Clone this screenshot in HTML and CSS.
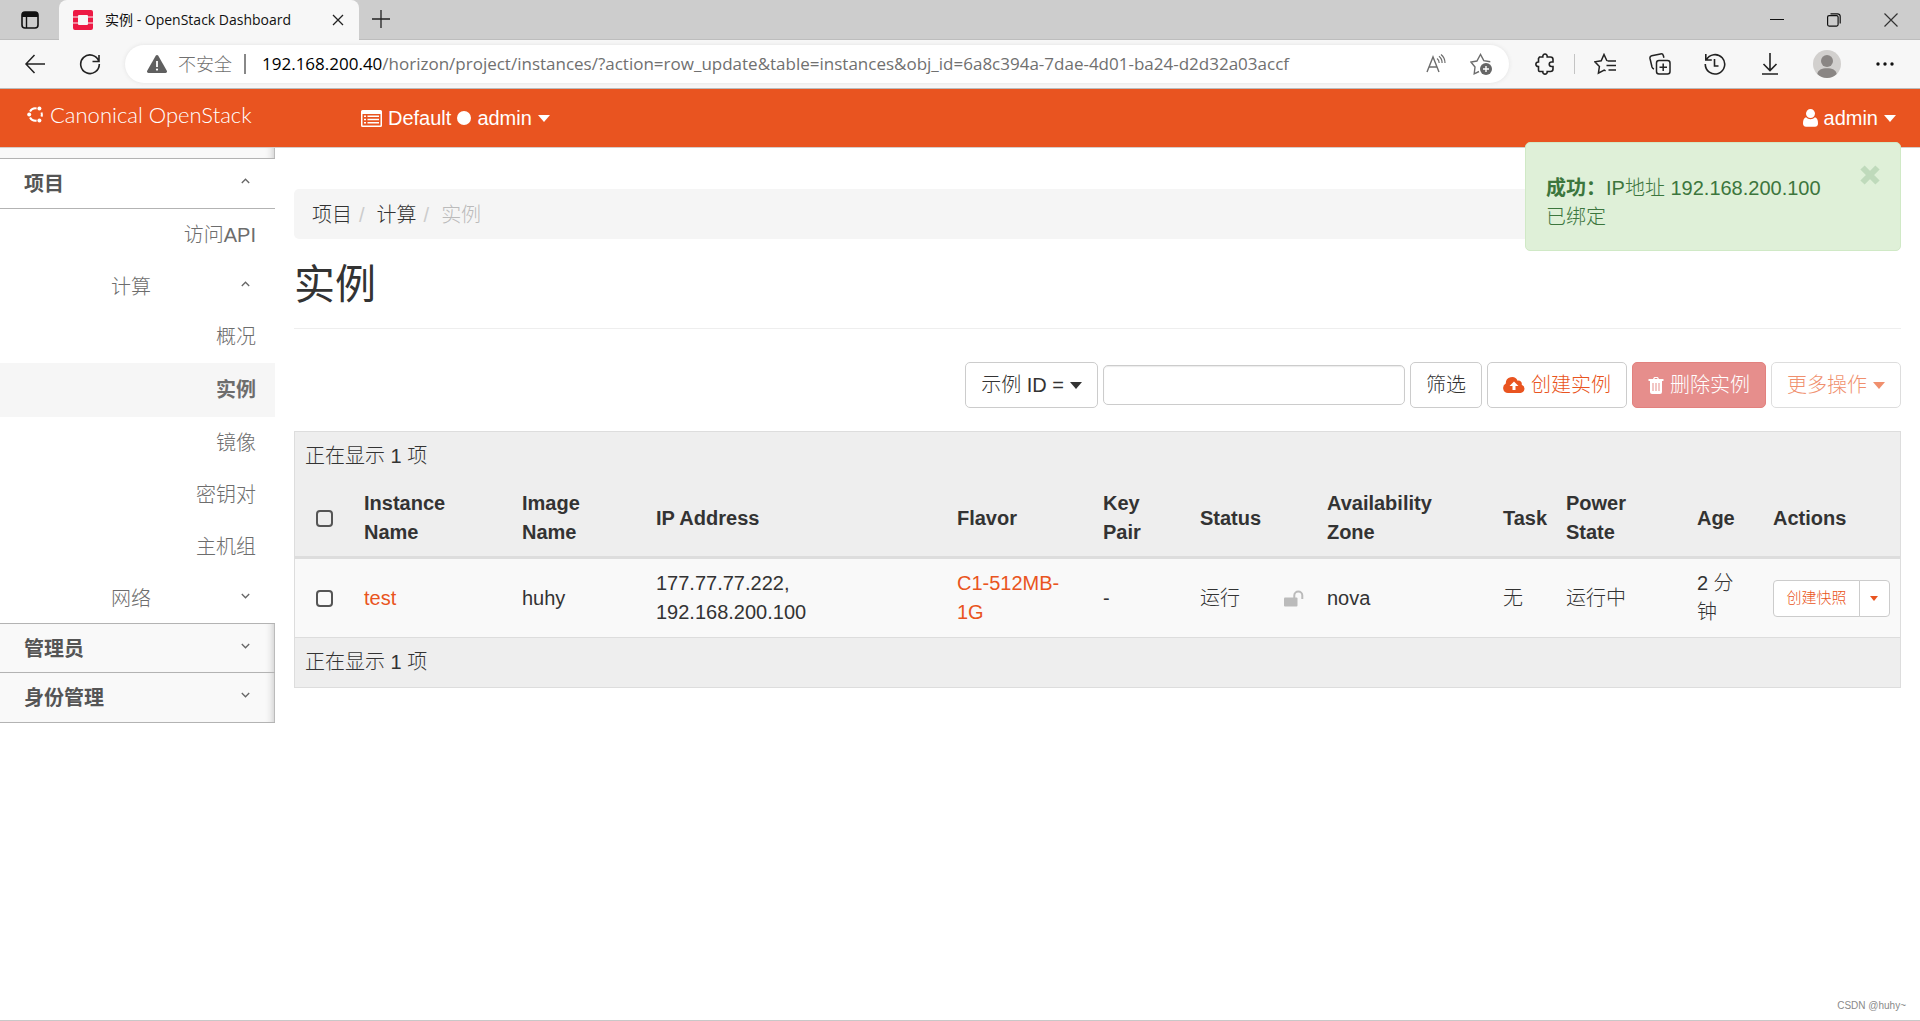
FILE: index.html
```html
<!DOCTYPE html>
<html lang="zh-CN">
<head>
<meta charset="utf-8">
<meta name="viewport" content="width=device-width, initial-scale=1">
<title>实例 - OpenStack Dashboard</title>
<link rel="stylesheet" href="styles.css">
</head>
<body>
<div class="tabstrip">
  <button class="tab-menu" aria-label="标签页操作">
    <svg width="18" height="18" viewBox="0 0 18 18"><rect x="1" y="1" width="16" height="16" rx="3" fill="none" stroke="#111" stroke-width="1.6"/><path d="M1 4a3 3 0 0 1 3-3h10a3 3 0 0 1 3 3v2H1z" fill="#111"/><path d="M5.500 6v11" stroke="#111" stroke-width="1.4"/></svg>
  </button>
  <div class="tab">
    <svg width="20" height="20" viewBox="0 0 20 20"><path fill="#ed1944" d="M2 0h16a2 2 0 0 1 2 2v4.500h-5V6a1 1 0 0 0-1-1H6a1 1 0 0 0-1 1v.5H0V2a2 2 0 0 1 2-2zM0 7.500h5v5H0zM15 7.500h5v5h-5zM0 13.500h5v.5a1 1 0 0 0 1 1h8a1 1 0 0 0 1-1v-.5h5V18a2 2 0 0 1-2 2H2a2 2 0 0 1-2-2z"/></svg>
    <span class="tab-title">实例 - OpenStack Dashboard</span>
    <button class="tab-close" aria-label="关闭标签页"><svg width="12" height="12" viewBox="0 0 12 12"><path d="M1 1l10 10M11 1L1 11" stroke="#222" stroke-width="1.300"/></svg></button>
  </div>
  <button class="new-tab" aria-label="新建标签页"><svg width="18" height="18" viewBox="0 0 18 18"><path d="M9 0v18M0 9h18" stroke="#222" stroke-width="1.300"/></svg></button>
  <div class="window-controls">
    <button aria-label="最小化"><svg width="14" height="14" viewBox="0 0 14 14"><path d="M0 6.500h14" stroke="#111"/></svg></button>
    <button aria-label="还原"><svg width="14" height="14" viewBox="0 0 14 14" fill="none" stroke="#111" stroke-width="1.200"><rect x=".6" y="2.600" width="10.500" height="10.500" rx="1.500"/><path d="M3.500.8h7a2.600 2.600 0 0 1 2.700 2.600V10.500"/></svg></button>
    <button aria-label="关闭"><svg width="14" height="14" viewBox="0 0 14 14"><path d="M.5.5l13 13M13.500.5l-13 13" stroke="#333" stroke-width="1.200"/></svg></button>
  </div>
</div>

<div class="toolbar">
  <button class="tool" aria-label="返回"><svg width="22" height="20" viewBox="0 0 22 20" fill="none" stroke="#222" stroke-width="1.500"><path d="M21 10H2M10.500 1L2 10l8.500 9"/></svg></button>
  <button class="tool" aria-label="刷新"><svg width="22" height="22" viewBox="0 0 22 22" fill="none" stroke="#222" stroke-width="1.600"><path d="M19.800 8.200A9.300 9.300 0 1 0 20.300 11M20 2v6.500h-6.500"/></svg></button>
  <div class="address">
    <svg class="warn" width="20" height="18" viewBox="0 0 20 18"><path d="M8.700.8a1.500 1.500 0 0 1 2.600 0l8.500 15a1.500 1.500 0 0 1-1.300 2.200h-17a1.500 1.500 0 0 1-1.300-2.200z" fill="#5f5f5f"/><path d="M10 6v6" stroke="#fff" stroke-width="1.800"/><circle cx="10" cy="14.600" r="1.100" fill="#fff"/></svg>
    <span class="insecure">不安全</span>
    <span class="address-sep"></span>
    <div class="url" role="textbox" aria-label="地址" contenteditable="true"><span class="host">192.168.200.40</span>/horizon/project/instances/?action=row_update&amp;table=instances&amp;obj_id=6a8c394a-7dae-4d01-ba24-d2d32a03accf</div>
    <button class="pill-tool" aria-label="朗读此页"><svg width="20" height="20" viewBox="0 0 20 20" fill="none" stroke="#6d6d6d" stroke-width="1.400"><path d="M1 18L7 3l6 15M3 13h8"/><path d="M11 4.500c1.400 1 2.200 2.600 2.200 4.500M13 2.300c2 1.500 3.100 3.900 3.100 6.700M15 .5c2.500 2 4 5 4 8.500" stroke-width="1.200"/></svg></button>
    <button class="pill-tool" aria-label="收藏此页"><svg width="22" height="22" viewBox="0 0 22 22" fill="none" stroke="#6d6d6d" stroke-width="1.400"><path d="M9 18.500l-4.800 2.300L5 14 .9 9l6-1L10.500 1.500l3.300 6.200 6.500 1"/><circle cx="16" cy="16" r="6" fill="#666" stroke="none"/><path d="M16 13v6M13 16h6" stroke="#fff"/></svg></button>
  </div>
  <button class="tool" aria-label="扩展"><svg width="20" height="22" viewBox="0 0 20 22" fill="none" stroke="#222" stroke-width="1.600"><path d="M4.500 4h3.300c-.4-4 4.800-4 4.400 0h3.300a2.500 2.500 0 0 1 2.500 2.500V9h-1.500c-3 0-3 4.500 0 4.500H18v2.500a2.500 2.500 0 0 1-2.500 2.500h-3.300c.4 3.500-4.800 3.500-4.400 0H4.500A1.500 1.500 0 0 1 3.500 17v-3.500c-3.500.3-3.500-4.800 0-4.500V5.500z"/></svg></button>
  <span class="tool-sep"></span>
  <button class="tool" aria-label="收藏夹"><svg width="22" height="22" viewBox="0 0 22 22" fill="none" stroke="#222" stroke-width="1.500"><path d="M13 8L10 1.500 7.200 7.800l-6.400 1L5.400 13.500l-1 6.700 5.800-3.100 1.400.8M13.500 8H22M12.500 12.500H22M14.500 17H22"/></svg></button>
  <button class="tool" aria-label="集锦"><svg width="22" height="22" viewBox="0 0 22 22" fill="none" stroke="#222" stroke-width="1.500"><rect x="7.500" y="7.500" width="13.500" height="13.500" rx="2.500"/><path d="M14.200 10.500v7.500M10.500 14.200H18M5 16c-1.400-.4-1.700-1-2-2L1 5.500C.7 4 1.200 3.200 2.700 2.800L11.500.9c1.500-.3 2.500.3 2.900 1.800l.5 2"/></svg></button>
  <button class="tool" aria-label="历史记录"><svg width="22" height="22" viewBox="0 0 22 22" fill="none" stroke="#222" stroke-width="1.600"><path d="M2.300 7A9.700 9.700 0 1 1 1.300 11M1.800 1v6h6M10.500 6v7h4"/></svg></button>
  <button class="tool" aria-label="下载"><svg width="18" height="22" viewBox="0 0 18 22" fill="none" stroke="#222" stroke-width="1.600"><path d="M9 0v17M2.500 11L9 17.500 15.500 11M1 21h16"/></svg></button>
  <button class="tool tool-wide" aria-label="用户"><svg width="28" height="28" viewBox="0 0 28 28"><circle cx="14" cy="14" r="14" fill="#d2d0ce"/><circle cx="14" cy="11" r="6" fill="#8a8684"/><path d="M4.300 24C5 20 8.600 18.300 14 18.300S23 20 23.700 24a14 14 0 0 1-19.400 0z" fill="#8a8684"/></svg></button>
  <button class="tool" aria-label="设置及其他"><svg width="18" height="4" viewBox="0 0 18 4" fill="#111"><circle cx="2" cy="2" r="1.700"/><circle cx="9" cy="2" r="1.700"/><circle cx="16" cy="2" r="1.700"/></svg></button>
</div>

<header class="topbar">
  <a class="brand" href="#"><svg width="17" height="17" viewBox="0 0 17 17"><g fill="none" stroke="#fff" stroke-width="2"><path d="M3 5.500A6.200 6.200 0 0 1 9.600 2.500M14.500 6.500a6.200 6.200 0 0 1 0 4.200M9.600 14.600A6.200 6.200 0 0 1 3 11.500"/></g><g fill="#fff"><circle cx="2.200" cy="8.500" r="2"/><circle cx="12.400" cy="2.500" r="2"/><circle cx="12.400" cy="14.500" r="2"/></g></svg><span>Canonical OpenStack</span></a>
  <button class="context"><svg width="21" height="17" viewBox="0 0 21 17"><path fill="#fff" fill-rule="evenodd" d="M1.500 0h18A1.500 1.500 0 0 1 21 1.500v14a1.500 1.500 0 0 1-1.500 1.500h-18A1.500 1.500 0 0 1 0 15.500v-14A1.500 1.500 0 0 1 1.500 0zM1.500 4v11.500h18V4z"/><path d="M3 6.300h2M6.500 6.300H18M3 9.500h2M6.500 9.500H18M3 12.700h2M6.500 12.700H18" stroke="#fff" stroke-width="1.500"/></svg><span>Default</span><i class="dot"></i><span>admin</span><i class="caret"></i></button>
  <button class="user"><svg width="15" height="18" viewBox="0 0 15 18" fill="#fff"><circle cx="7.500" cy="4.600" r="4.500"/><path d="M3 8.200a6 6 0 0 0 9 0c2 .5 3 3 3 6 0 2-1 3.600-3 3.600H3c-2 0-3-1.600-3-3.600 0-3 1-5.500 3-6z"/></svg><span>admin</span><i class="caret"></i></button>
</header>

<div class="layout">
  <nav class="sidebar">
    <div class="side-cap"></div>
    <a class="panel open" href="#">项目<svg class="chev" width="9" height="6" viewBox="0 0 9 6"><path d="M.8 5L4.500 1.200 8.200 5"/></svg></a>
    <a class="item" href="#">访问API</a>
    <a class="group" href="#">计算<svg class="chev" width="9" height="6" viewBox="0 0 9 6"><path d="M.8 5L4.500 1.200 8.200 5"/></svg></a>
    <a class="item" href="#">概况</a>
    <a class="item active" href="#">实例</a>
    <a class="item" href="#">镜像</a>
    <a class="item" href="#">密钥对</a>
    <a class="item" href="#">主机组</a>
    <a class="group" href="#">网络<svg class="chev" width="9" height="6" viewBox="0 0 9 6"><path d="M.8 1L4.500 4.800 8.200 1"/></svg></a>
    <a class="panel" href="#">管理员<svg class="chev" width="9" height="6" viewBox="0 0 9 6"><path d="M.8 1L4.500 4.800 8.200 1"/></svg></a>
    <a class="panel" href="#">身份管理<svg class="chev" width="9" height="6" viewBox="0 0 9 6"><path d="M.8 1L4.500 4.800 8.200 1"/></svg></a>
  </nav>

  <main class="content">
    <ol class="breadcrumb"><li><a href="#">项目</a></li><li><a href="#">计算</a></li><li class="here">实例</li></ol>
    <h1>实例</h1>
    <div class="actions">
      <button class="btn">示例 ID =<i class="caret"></i></button>
      <input class="filter" type="text" aria-label="筛选条件">
      <button class="btn">筛选</button>
      <button class="btn btn-link"><svg width="22" height="16" viewBox="0 0 22 16"><path fill="#e95420" fill-rule="evenodd" d="M5 16a5 5 0 0 1-2.200-9.400A6.200 6.200 0 0 1 14.600 3.700 3.300 3.300 0 0 1 18.700 7.700 4.300 4.300 0 0 1 17.500 16zM11 4.500L6.500 9h3v4h3V9h3z"/></svg>创建实例</button>
      <button class="btn btn-danger" disabled><svg width="16" height="17" viewBox="0 0 16 17"><path fill="#fff" fill-rule="evenodd" d="M5 2l.8-1.500Q6 0 6.600 0h2.800q.6 0 .8.500L11 2h4.500v2H14v11a2 2 0 0 1-2 2H4a2 2 0 0 1-2-2V4H.500V2zM6.500 2h3l-.4-.9H6.900zM4.500 6v8h1V6zM7.500 6v8h1V6zM10.500 6v8h1V6z"/></svg>删除实例</button>
      <button class="btn btn-link" disabled>更多操作<i class="caret"></i></button>
    </div>
    <table class="grid">
      <colgroup><col class="c-check"><col class="c-name"><col class="c-image"><col><col class="c-flavor"><col class="c-key"><col class="c-status"><col class="c-lock"><col class="c-zone"><col class="c-task"><col class="c-power"><col class="c-age"><col class="c-act"></colgroup>
      <thead>
        <tr><td colspan="13">正在显示 1 项</td></tr>
        <tr class="heads"><th class="check"><input type="checkbox" aria-label="全选"></th><th>Instance Name</th><th>Image Name</th><th>IP Address</th><th>Flavor</th><th>Key Pair</th><th>Status</th><th></th><th>Availability Zone</th><th>Task</th><th>Power State</th><th>Age</th><th>Actions</th></tr>
      </thead>
      <tbody>
        <tr><td class="check"><input type="checkbox" aria-label="选择 test"></td><td><a href="#">test</a></td><td>huhy</td><td>177.77.77.222,<br>192.168.200.100</td><td><a href="#">C1-512MB-1G</a></td><td>-</td><td>运行</td><td><svg class="lock" width="20" height="17" viewBox="0 0 20 17"><rect y="7.500" width="13.500" height="9" rx="1" fill="#bbb"/><path d="M10.300 8V5.500a4 4 0 0 1 8 0V9" fill="none" stroke="#bbb" stroke-width="2"/></svg></td><td>nova</td><td>无</td><td>运行中</td><td>2 分钟</td><td><div class="split"><button class="snap">创建快照</button><button class="more" aria-label="更多"><i class="caret"></i></button></div></td></tr>
      </tbody>
      <tfoot><tr><td colspan="13">正在显示 1 项</td></tr></tfoot>
    </table>
  </main>

  <div class="alert" role="alert">
    <p><strong>成功：</strong>IP地址 192.168.200.100 已绑定</p>
    <button class="dismiss" aria-label="关闭"><svg width="20" height="20" viewBox="0 0 20 20"><path d="M2.500 2.500l15 15M17.500 2.500l-15 15" stroke="#bfdabb" stroke-width="6"/></svg></button>
  </div>
</div>
<footer class="credit">CSDN @huhy~</footer>
</body>
</html>
```
FILE: styles.css
```css
* { box-sizing: border-box; }

body {
  margin: 0;
  min-height: 100vh;
  display: flex;
  flex-direction: column;
  border-bottom: 1px solid #c8c8c8;
  background: #fff;
  color: #333;
  font: 300 20px/29px "Liberation Sans", "Noto Sans CJK SC", sans-serif;
}

a { color: #e95420; text-decoration: none; }
svg { display: block; flex: none; }
button {
  display: flex;
  align-items: center;
  justify-content: center;
  padding: 0;
  border: 0;
  background: none;
  color: inherit;
  font: inherit;
  white-space: nowrap;
}

/* Browser chrome */
.tabstrip {
  display: flex;
  height: 40px;
  background: #cdcdcd;
  box-shadow: inset 0 -1px #bdbdbd;
}
.tab-menu { width: 59px; }
.tab {
  display: flex;
  align-items: center;
  gap: 12px;
  width: 300px;
  padding: 0 13px 0 14px;
  border-radius: 8px 8px 0 0;
  background: #f7f7f7;
}
.tab-title {
  flex: 1;
  color: #111;
  font: 400 14px/20px "Open Sans", "Noto Sans CJK SC", sans-serif;
  white-space: nowrap;
}
.tab-close { width: 16px; height: 20px; }
.new-tab { width: 43px; padding-bottom: 2px; }
.window-controls { display: flex; margin-left: auto; padding-right: 1px; }
.window-controls button { width: 57px; }

.toolbar {
  display: flex;
  align-items: center;
  height: 49px;
  padding: 0 8px 0 7px;
  border-bottom: 1px solid #bbb;
  background: #f7f7f7;
}
.tool { width: 55px; height: 40px; }
.tool-wide { width: 60px; }
.tool-sep { width: 1px; height: 20px; margin: 0 2px; background: #c4c4c4; }
.address {
  flex: 1;
  display: flex;
  align-items: center;
  min-width: 0;
  height: 38px;
  margin: 0 8px;
  padding: 0 6px 0 22px;
  border-radius: 19px;
  background: #fff;
  box-shadow: 0 0 4px #e2e2e2;
  color: #707070;
  font: 400 17px/24px "Open Sans", "Noto Sans CJK SC", sans-serif;
}
.insecure { margin-left: 11px; font-size: 18px; font-weight: 300; }
.address-sep { width: 2px; height: 20px; margin: 0 16px 0 12px; background: #888; }
.url { flex: 1; min-width: 0; overflow: hidden; white-space: nowrap; }
.host { color: #000; }
.pill-tool { width: 45px; height: 36px; }

/* Dashboard header */
.topbar {
  display: flex;
  align-items: center;
  height: 59px;
  padding: 0 24px 0 27px;
  border-bottom: 1px solid #d5cdca;
  background: #e95420;
  color: #fff;
}
.brand {
  display: flex;
  align-items: center;
  gap: 6px;
  width: 334px;
  padding-bottom: 7px;
  color: #fff;
  font: 300 22px/29px Lato, sans-serif;
}
.context, .user { gap: 6px; }
.user { margin-left: auto; }
.dot { width: 14px; height: 14px; border-radius: 7px; background: #fff; }
.caret {
  width: 0;
  border: 6px solid transparent;
  border-top: 7px solid;
  border-bottom: 0;
}

.layout {
  position: relative;
  display: flex;
  align-items: flex-start;
}

/* Side navigation */
.sidebar { flex: none; width: 275px; }
.sidebar a {
  display: flex;
  align-items: center;
  color: #6d6d6d;
}
.side-cap, .sidebar .panel {
  border-bottom: 1px solid #b3b3b3;
  background: #f9f9f9;
  box-shadow: inset -1px 0 #bbb, inset -9px 0 8px -8px #bbb;
}
.side-cap { height: 11px; }
.sidebar .panel {
  justify-content: space-between;
  height: 50px;
  padding: 2px 25px 0 24px;
  color: #555;
  font-weight: 700;
}
.sidebar .open { background: #fff; box-shadow: none; }
.group + .panel { border-top: 1px solid #b3b3b3; }
.sidebar .item { justify-content: flex-end; height: 52px; padding-right: 19px; }
.sidebar .active { height: 54px; background: #f6f6f6; font-weight: 700; }
.sidebar .group {
  justify-content: space-between;
  height: 50px;
  padding: 2px 25px 0 111px;
}
.chev { margin-bottom: 7px; fill: none; stroke: #666; stroke-width: 1.3; }

/* Main area */
.content { flex: 1; min-width: 0; padding: 41px 19px 0; }
.breadcrumb {
  display: flex;
  margin: 0 0 20px;
  padding: 12px 18px 9px;
  border-radius: 5px;
  background: #f5f5f5;
  list-style: none;
}
.breadcrumb a { color: #333; }
.breadcrumb li + li::before { content: "/"; padding: 0 12px 0 7px; color: #ccc; }
.breadcrumb .here { color: #bbb; }
h1 {
  margin: 0 0 33px;
  padding-bottom: 17px;
  border-bottom: 1px solid #eee;
  font-size: 41px;
  font-weight: 400;
  line-height: 52px;
}
.actions {
  display: flex;
  align-items: center;
  justify-content: flex-end;
  gap: 5px;
  margin-bottom: 23px;
}
.btn {
  gap: 6px;
  height: 46px;
  padding: 0 15px;
  border: 1px solid #ccc;
  border-radius: 5px;
  background: #fff;
}
.btn-link { color: #e95420; }
.btn-danger { border-color: #d43f3a; background: #d9534f; color: #fff; }
.btn:disabled { opacity: .65; }
.filter {
  width: 302px;
  height: 40px;
  padding: 0 12px;
  border: 1px solid #ccc;
  border-radius: 5px;
  box-shadow: inset 0 1px 1px #ececec;
  font: inherit;
}

.grid {
  width: 100%;
  border: 1px solid #ddd;
  border-collapse: separate;
  border-spacing: 0;
  table-layout: fixed;
}
.grid td, .grid th { padding: 10px; text-align: left; vertical-align: middle; }
.grid thead, .grid tfoot { background: #eee; }
.grid tbody { background: #f9f9f9; }
.grid .heads th { padding-top: 8px; padding-bottom: 9px; border-bottom: 3px solid #ddd; font-weight: 700; }
.grid tfoot td { border-top: 1px solid #ddd; }
.grid .check { padding-left: 21px; }
.c-check { width: 59px; }
.c-name { width: 158px; }
.c-image { width: 134px; }
.c-flavor { width: 146px; }
.c-key { width: 97px; }
.c-status { width: 84px; }
.c-lock { width: 43px; }
.c-zone { width: 176px; }
.c-task { width: 63px; }
.c-power { width: 131px; }
.c-age { width: 76px; }
.c-act { width: 137px; }

.grid input {
  display: block;
  width: 17px;
  height: 17px;
  margin: 0;
  appearance: none;
  border: 2px solid #555;
  border-radius: 4px;
}
.split { display: flex; height: 37px; color: #e95420; font-size: 15px; line-height: 20px; }
.split button { border: 1px solid #ccc; background: #fff; }
.snap { width: 87px; border-radius: 4px 0 0 4px; }
.more { width: 31px; margin-left: -1px; border-radius: 0 4px 4px 0; }
.more .caret { border-width: 5px 4px 0; }

/* Notification above the page */
.alert {
  position: absolute;
  top: -6px;
  right: 19px;
  display: flex;
  align-items: flex-start;
  width: 376px;
  padding: 31px 20px 18px;
  border: 1px solid #d0e9c6;
  border-radius: 5px;
  background: #dff0d8;
  color: #3c763d;
}
.alert p { flex: 1; margin: 0; padding-right: 24px; }
.alert strong { font-weight: 700; }
.dismiss { margin-top: -9px; }

.credit {
  margin-top: auto;
  padding: 0 14px 4px;
  color: #8a8a8a;
  font-size: 10px;
  line-height: 20px;
  text-align: right;
}
```
